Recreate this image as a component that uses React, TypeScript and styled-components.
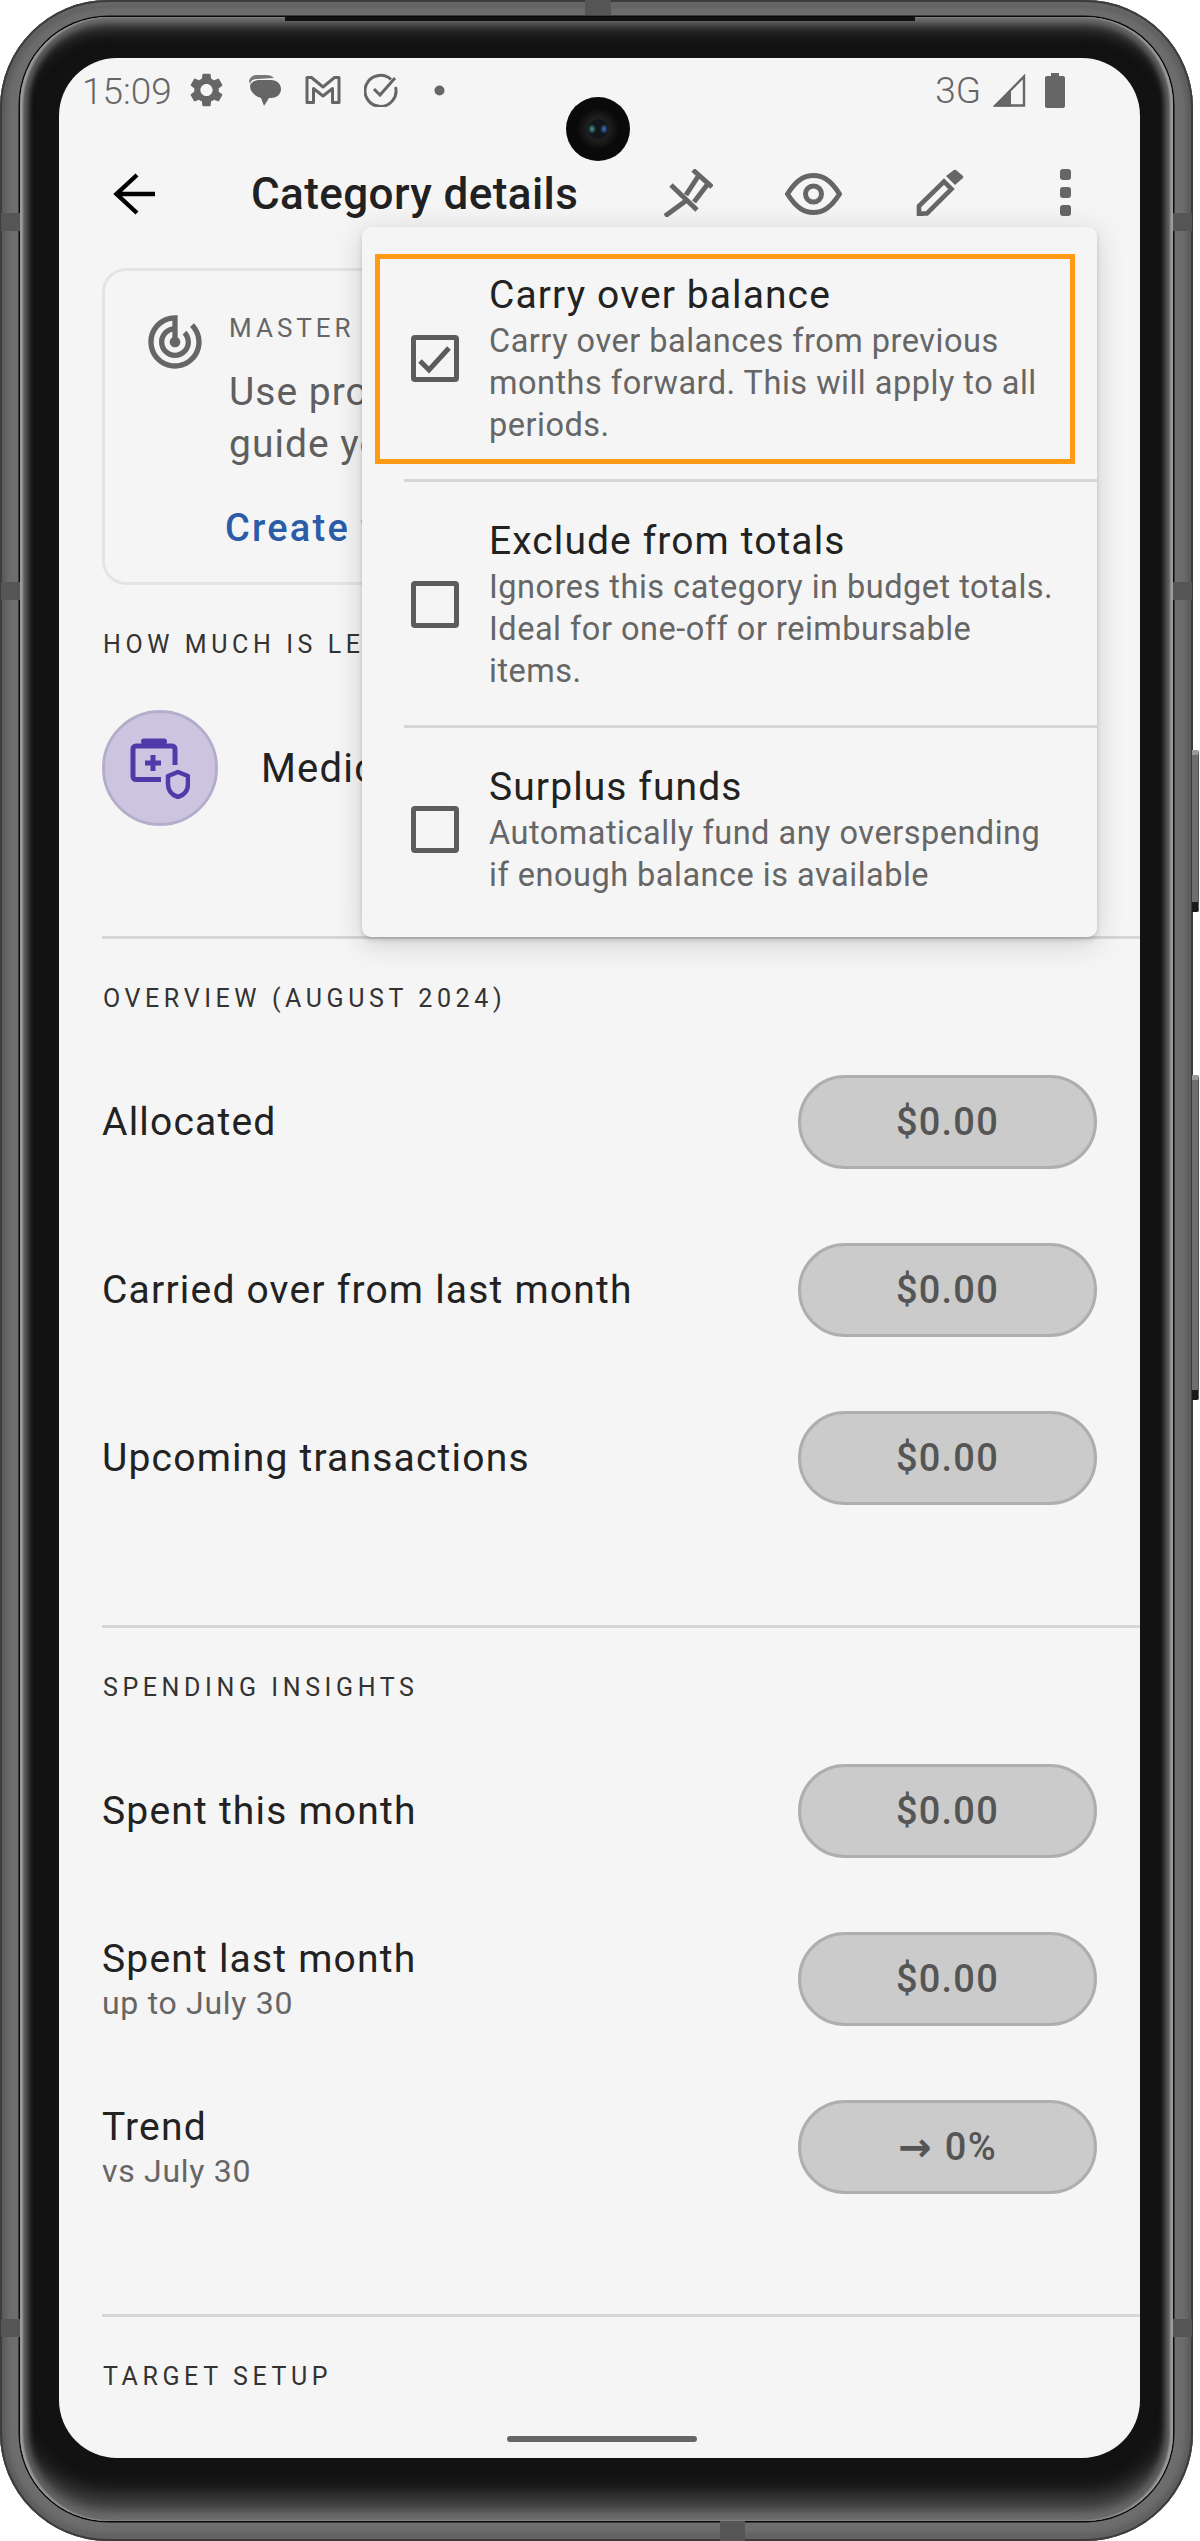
import React from "react";
import styled, { createGlobalStyle } from "styled-components";

const Global = createGlobalStyle`
  html, body { margin: 0; padding: 0; background: #fff; }
  body { font-family: Roboto, "Liberation Sans", sans-serif; }
`;

const Page = styled.div`
  position: relative;
  width: 1200px;
  height: 2541px;
  overflow: hidden;
  background: #fff;
`;

const Device = styled.div`
  position: relative;
  box-sizing: border-box;
  width: 1193px;
  height: 2541px;
  padding: 17px 20px 20px 20px;
  border-radius: 108px;
  background: #6e6e6e;
  box-shadow: inset 0 0 0 2px #3c3c3c, inset 0 0 8px 5px #525252, inset 0 -4px 3px #8a8a8a, inset 0 4px 3px #a0a0a0;
`;

const Bezel = styled.div`
  box-sizing: border-box;
  height: 100%;
  padding: 41px 33px 61px 39px;
  border-radius: 88px;
  background: #121212;
  box-shadow:
    0 0 0 1.500px #0a0a0a,
    inset 3px 0 2px #9c9c9c,
    inset -3px 0 2px #9c9c9c,
    inset 9px 0 6px -1px #5e5e5e,
    inset -9px 0 6px -1px #5e5e5e,
    inset 0 5px 8px #808080,
    inset 0 18px 14px -4px #3c3c3c,
    inset 0 -8px 12px #787878,
    inset 0 -34px 20px -8px #484848;
`;

const TopSeam = styled.i`
  position: absolute;
  left: 285px;
  top: 17px;
  width: 630px;
  height: 4px;
  background: #111;
`;

const Notch = styled.i<{ $x: number; $y: number; $w: number; $h: number }>`
  position: absolute;
  left: ${(p) => p.$x}px;
  top: ${(p) => p.$y}px;
  width: ${(p) => p.$w}px;
  height: ${(p) => p.$h}px;
  background: #555;
`;

const SideKey = styled.i<{ $y: number; $h: number }>`
  position: absolute;
  left: 1192px;
  top: ${(p) => p.$y}px;
  width: 7px;
  height: ${(p) => p.$h}px;
  box-sizing: border-box;
  background: #6e6e6e;
  border-top: 5px solid #999;
  border-bottom: 10px solid #1a1a1a;
  border-right: 1px solid #555;
  border-radius: 0 2px 2px 0;
`;

const Screen = styled.div`
  position: relative;
  width: 1081px;
  height: 2400px;
  overflow: hidden;
  border-radius: 58px;
  background: #f5f5f5;
`;

const StatusBar = styled.div`
  display: flex;
  align-items: center;
  height: 64px;
  padding: 0 75px 0 23px;
  color: #666;
`;

const Clock = styled.span`
  margin: 2px 18px 0 0;
  font-size: 37px;
  font-weight: 300;
`;

const StatusIcon = styled.svg<{ $left?: number }>`
  display: block;
  flex: none;
  margin-left: ${(p) => p.$left ?? 0}px;
`;

const StatusRight = styled.div`
  display: flex;
  align-items: center;
  margin-left: auto;
  gap: 12px;
`;

const Network = styled.span`
  font-size: 37px;
  font-weight: 300;
  line-height: 1;
`;

const Camera = styled.svg`
  position: absolute;
  left: 507px;
  top: 39px;
`;

const TopBar = styled.div`
  display: flex;
  align-items: center;
  height: 144px;
  padding-left: 54px;
`;

const Title = styled.h1`
  margin: 0 0 0 96px;
  width: 328px;
  flex: none;
  font-size: 44px;
  font-weight: 500;
  line-height: 52px;
  letter-spacing: 0.4px;
  color: #212121;
  white-space: nowrap;
`;

const BarIcon = styled.svg<{ $left: number; $up?: number }>`
  display: block;
  flex: none;
  margin-left: ${(p) => p.$left}px;
  margin-top: ${(p) => -(p.$up ?? 0)}px;
`;

const Card = styled.div`
  box-sizing: border-box;
  display: flex;
  height: 317px;
  margin: 2px 43px 0;
  padding: 39px 0 0 38px;
  border: 3px solid #e4e4e4;
  border-radius: 24px;
`;

const CardIcon = styled.svg`
  flex: none;
`;

const CardText = styled.div`
  margin-left: 22px;
  padding-top: 3px;
`;

const CardEyebrow = styled.div`
  font-size: 26px;
  line-height: 30px;
  letter-spacing: 4px;
  color: #666;
`;

const CardBody = styled.p`
  margin: 23px 0 0;
  width: 700px;
  font-size: 39px;
  line-height: 52px;
  letter-spacing: 1px;
  color: #5f5f5f;
`;

const CardLink = styled.div`
  margin: 34px 0 0 -4px;
  font-size: 38px;
  font-weight: 500;
  line-height: 48px;
  letter-spacing: 2.200px;
  color: #2a5ca8;
`;

const SectionLabel = styled.div`
  margin: 44px 0 0 44px;
  font-size: 25px;
  line-height: 32px;
  letter-spacing: 4.600px;
  color: #333;
  white-space: nowrap;
`;

const CategoryRow = styled.div`
  display: flex;
  align-items: center;
  margin: 49px 0 0 43px;
`;

const CategoryBadge = styled.div`
  box-sizing: border-box;
  display: flex;
  align-items: center;
  justify-content: center;
  width: 116px;
  height: 116px;
  border: 3px solid #b4aecb;
  border-radius: 50%;
  background: #cdc4e2;
`;

const CategoryName = styled.span`
  margin-left: 43px;
  font-size: 40px;
  letter-spacing: 1.200px;
  color: #222;
`;

const Rule = styled.div<{ $top: number }>`
  height: 3px;
  margin: ${(p) => p.$top}px 0 0 43px;
  background: #d6d6d6;
`;

const Rows = styled.div`
  display: flex;
  flex-direction: column;
  gap: 74px;
  margin: 60px 43px 0;
`;

const Row = styled.div`
  display: flex;
  align-items: center;
  justify-content: space-between;
  height: 94px;
`;

const RowText = styled.div`
  display: flex;
  flex-direction: column;
`;

const RowLabel = styled.span`
  font-size: 39px;
  line-height: 48px;
  letter-spacing: 1.200px;
  color: #222;
`;

const RowSub = styled.span`
  font-size: 32px;
  line-height: 40px;
  letter-spacing: 0.700px;
  color: #666;
`;

const Pill = styled.div`
  box-sizing: border-box;
  display: flex;
  align-items: center;
  justify-content: center;
  width: 299px;
  height: 94px;
  border: 3px solid #aeaeae;
  border-radius: 47px;
  background: #cbcbcb;
  font-size: 38px;
  font-weight: 500;
  letter-spacing: 1.200px;
  color: #555;
`;

const Arrow = styled.span`
  margin-right: 12px;
  font-family: "DejaVu Sans", sans-serif;
  font-size: 40px;
  font-weight: 700;
  line-height: 1;
`;

const HomeBar = styled.div`
  position: absolute;
  left: 448px;
  bottom: 16px;
  width: 190px;
  height: 6px;
  border-radius: 3px;
  background: #666;
`;

const Menu = styled.div`
  position: absolute;
  left: 303px;
  top: 169px;
  width: 735px;
  box-sizing: border-box;
  padding: 9px 0 8px;
  border-radius: 9px;
  background: #f5f5f5;
  box-shadow: 0 3px 5px rgba(0, 0, 0, 0.14), 0 6px 30px rgba(0, 0, 0, 0.16);
`;

const MenuItem = styled.div`
  position: relative;
  display: flex;
  align-items: center;
  padding: 35px 40px 33px 49px;
`;

const MenuDivider = styled.div`
  height: 3px;
  margin-left: 42px;
  background: #d6d6d6;
`;

const Box = styled.div`
  box-sizing: border-box;
  flex: none;
  width: 48px;
  height: 47px;
  border: 5px solid #5c5c5c;
  border-radius: 4px;
`;

const BoxTick = styled.svg`
  display: block;
  margin: -5px;
`;

const MenuText = styled.div`
  margin-left: 30px;
`;

const MenuTitle = styled.div`
  font-size: 39px;
  line-height: 49px;
  letter-spacing: 1.100px;
  color: #222;
`;

const MenuDesc = styled.div`
  font-size: 32.500px;
  line-height: 42px;
  letter-spacing: 0.500px;
  color: #666;
`;

const Highlight = styled.div`
  position: absolute;
  left: 13px;
  right: 22px;
  top: 18px;
  height: 210px;
  box-sizing: border-box;
  border: 5px solid #ff9a14;
  pointer-events: none;
`;

function Gear() {
  return (
    <StatusIcon width="33" height="34" viewBox="2.600 2 18.800 20" fill="#666">
      <path d="M19.140 12.940c.04-.3.06-.61.06-.94 0-.32-.02-.64-.07-.94l2.030-1.580c.18-.14.23-.41.12-.61l-1.920-3.320c-.12-.22-.37-.29-.59-.22l-2.390.96c-.5-.38-1.030-.7-1.620-.94l-.36-2.540c-.04-.24-.24-.41-.48-.41h-3.840c-.24 0-.43.17-.47.41l-.36 2.540c-.59.24-1.130.57-1.620.94l-2.390-.96c-.22-.08-.47 0-.59.22L2.740 8.870c-.12.21-.08.47.12.61l2.030 1.580c-.05.3-.09.63-.09.94s.02.64.07.94l-2.030 1.580c-.18.14-.23.41-.12.61l1.920 3.320c.12.22.37.29.59.22l2.390-.96c.5.38 1.030.7 1.620.94l.36 2.540c.05.24.24.41.48.41h3.840c.24 0 .44-.17.47-.41l.36-2.540c.59-.24 1.130-.56 1.620-.94l2.390.96c.22.08.47 0 .59-.22l1.920-3.320c.12-.22.07-.47-.12-.61l-2.010-1.580zM12 15.600c-1.980 0-3.600-1.620-3.600-3.600s1.620-3.600 3.600-3.600 3.600 1.620 3.600 3.600-1.620 3.600-3.600 3.600z" />
    </StatusIcon>
  );
}

function Chat() {
  return (
    <StatusIcon $left={26} width="32" height="32" viewBox="0 0 32 32" fill="#666">
      <path d="M0 7c1-4 4-6 8-6h9c4 0 6 1 8 3L9 5C5 5 2 6 1 10z" fill="#777" />
      <path d="M11 6h11c6 0 10 4 10 9s-4 9-10 9h-2l-5 8-3-8C6 22 1 18 1 12c1-4 5-6 10-6z" />
    </StatusIcon>
  );
}

function GmailM() {
  return (
    <StatusIcon $left={24} width="36" height="30" viewBox="0 0 36 30" fill="none" stroke="#666" strokeWidth="3" strokeLinejoin="round">
      <path d="M2 2.500h4.500L18 12 29.500 2.500H34v25h-6.500V13.500L18 21 8.500 13.500v14H2z" />
    </StatusIcon>
  );
}

function TaskCircle() {
  return (
    <StatusIcon $left={23} width="34" height="34" viewBox="0 0 34 34" fill="none" stroke="#666" strokeWidth="3">
      <path d="M27 6.500A15.500 15.500 0 1 0 31.500 14" />
      <path d="M10 16l6 6L31 5" />
    </StatusIcon>
  );
}

function App() {
  return (
    <Page>
      <Global />
      <Device>
        <Bezel>
          <Screen>
            <StatusBar>
              <Clock>15:09</Clock>
              <Gear />
              <Chat />
              <GmailM />
              <TaskCircle />
              <StatusIcon $left={36} width="11" height="11" viewBox="0 0 11 11" fill="#666">
                <circle cx="5.500" cy="5.500" r="5" />
              </StatusIcon>
              <StatusRight>
                <Network>3G</Network>
                <StatusIcon width="33" height="33" viewBox="0 0 33 33" fill="none">
                  <path d="M31 2.500V31.500H2.500z" stroke="#666" strokeWidth="2.400" />
                  <path d="M18 16V32.500H1z" fill="#666" />
                </StatusIcon>
                <StatusIcon $left={7} width="20" height="35" viewBox="0 0 20 35" fill="#666">
                  <path d="M6 0h8v3h4a2 2 0 0 1 2 2v28a2 2 0 0 1-2 2H2a2 2 0 0 1-2-2V5a2 2 0 0 1 2-2h4z" />
                </StatusIcon>
              </StatusRight>
            </StatusBar>
            <TopBar>
              <BarIcon $left={0} width="42" height="42" viewBox="0 0 42 42" fill="none" stroke="#000" strokeWidth="4.400">
                <path d="M42 21H4M24 2 3.500 21 24 40" />
              </BarIcon>
              <Title>Category details</Title>
              <BarIcon $left={85} $up={3} width="49" height="48" viewBox="0 0 49 48" fill="none" stroke="#666" strokeWidth="5">
                <path d="M29 1 48 18M7 16l26 25M23 31 1 47" />
                <path d="M35 6 22 26M43 16 30 33" />
              </BarIcon>
              <BarIcon $left={72} width="57" height="42" viewBox="0 0 57 42" fill="none" stroke="#666" strokeWidth="5">
                <path d="M2.500 21C12 6 20 2.500 28.500 2.500S45 6 54.500 21C45 36 37 39.500 28.500 39.500S12 36 2.500 21Z" />
                <circle cx="28.500" cy="21" r="8" />
              </BarIcon>
              <BarIcon $left={74} $up={3} width="48" height="47" viewBox="0 0 48 47" fill="none" stroke="#666" strokeWidth="4.600">
                <path d="M3 44.500V37L28 12.500 35.500 20 11 44.500Z" />
                <path d="M1 47v-7l7 7z" fill="#666" stroke="none" />
                <path d="M30 7 38 1a2 2 0 0 1 2 0l7 6a2 2 0 0 1 0 2l-8 7z" fill="#666" stroke="none" />
              </BarIcon>
              <BarIcon $left={96} $up={3} width="11" height="47" viewBox="0 0 11 47" fill="#666">
                <rect width="11" height="11" y="0" rx="3" />
                <rect width="11" height="11" y="18" rx="3" />
                <rect width="11" height="11" y="36" rx="3" />
              </BarIcon>
            </TopBar>

            <Card>
              <CardIcon width="64" height="64" viewBox="0 0 24 24" fill="#666">
                <path d="M19.070 4.930l-1.410 1.410C19.100 7.790 20 9.790 20 12c0 4.420-3.580 8-8 8s-8-3.580-8-8c0-4.080 3.050-7.440 7-7.930v2.020C8.160 6.570 6 9.030 6 12c0 3.310 2.690 6 6 6s6-2.690 6-6c0-1.660-.67-3.160-1.760-4.240l-1.410 1.410C15.550 9.900 16 10.890 16 12c0 2.210-1.790 4-4 4s-4-1.790-4-4c0-1.860 1.280-3.410 3-3.860v2.140c-.6.350-1 .98-1 1.720 0 1.100.9 2 2 2s2-.9 2-2c0-.74-.4-1.380-1-1.720V2h-1C6.480 2 2 6.480 2 12s4.480 10 10 10 10-4.480 10-10c0-2.760-1.120-5.260-2.930-7.070z" />
              </CardIcon>
              <CardText>
                <CardEyebrow>MASTER YOUR BUDGET</CardEyebrow>
                <CardBody>Use progressive spending targets to guide your monthly budget.</CardBody>
                <CardLink>Create target</CardLink>
              </CardText>
            </Card>

            <SectionLabel>HOW MUCH IS LEFT</SectionLabel>
            <CategoryRow>
              <CategoryBadge>
                <svg width="60" height="62" viewBox="0 0 60 62" fill="none" stroke="#5039a8" strokeWidth="5">
                  <path d="M31 42.500H6a3 3 0 0 1-3-3V12a3 3 0 0 1 3-3h36a3 3 0 0 1 3 3v16" />
                  <path d="M14 4.500h20" strokeWidth="6" strokeLinecap="round" />
                  <path d="M23 18v16M15 26h16" />
                  <path d="M48 35l10 4v8c0 7-4 11-10 13-6-2-10-6-10-13v-8z" strokeWidth="4.500" strokeLinejoin="round" />
                </svg>
              </CategoryBadge>
              <CategoryName>Medical</CategoryName>
            </CategoryRow>
            <Rule $top={110} />

            <SectionLabel>OVERVIEW (AUGUST 2024)</SectionLabel>
            <Rows>
              <Row><RowText><RowLabel>Allocated</RowLabel></RowText><Pill>$0.00</Pill></Row>
              <Row><RowText><RowLabel>Carried over from last month</RowLabel></RowText><Pill>$0.00</Pill></Row>
              <Row><RowText><RowLabel>Upcoming transactions</RowLabel></RowText><Pill>$0.00</Pill></Row>
            </Rows>
            <Rule $top={120} />

            <SectionLabel>SPENDING INSIGHTS</SectionLabel>
            <Rows>
              <Row><RowText><RowLabel>Spent this month</RowLabel></RowText><Pill>$0.00</Pill></Row>
              <Row><RowText><RowLabel>Spent last month</RowLabel><RowSub>up to July 30</RowSub></RowText><Pill>$0.00</Pill></Row>
              <Row><RowText><RowLabel>Trend</RowLabel><RowSub>vs July 30</RowSub></RowText><Pill><Arrow>→</Arrow>0%</Pill></Row>
            </Rows>
            <Rule $top={120} />

            <SectionLabel>TARGET SETUP</SectionLabel>

            <Camera width="64" height="64" viewBox="0 0 64 64">
              <defs>
                <radialGradient id="lens" cx="50%" cy="50%" r="50%">
                  <stop offset="0%" stopColor="#2e2e32" />
                  <stop offset="55%" stopColor="#1e1e1e" />
                  <stop offset="100%" stopColor="#0a0a0a" />
                </radialGradient>
                <radialGradient id="glintA" cx="50%" cy="50%" r="50%">
                  <stop offset="0%" stopColor="#4a9a94" />
                  <stop offset="100%" stopColor="#12181c" />
                </radialGradient>
                <radialGradient id="glintB" cx="50%" cy="50%" r="50%">
                  <stop offset="0%" stopColor="#4a70c8" />
                  <stop offset="100%" stopColor="#12181c" />
                </radialGradient>
              </defs>
              <circle cx="32" cy="32" r="32" fill="#0a0a0a" />
              <circle cx="32" cy="32" r="21" fill="url(#lens)" />
              <circle cx="32" cy="32" r="10" fill="#10161c" />
              <ellipse cx="26" cy="32" rx="4" ry="5" fill="url(#glintA)" />
              <ellipse cx="38" cy="32" rx="4" ry="5" fill="url(#glintB)" />
            </Camera>

            <Menu>
              <MenuItem>
                <Highlight />
                <Box>
                  <BoxTick width="48" height="47" viewBox="0 0 48 47" fill="none" stroke="#5c5c5c" strokeWidth="5">
                    <path d="M9 26l9 9L38 13" />
                  </BoxTick>
                </Box>
                <MenuText>
                  <MenuTitle>Carry over balance</MenuTitle>
                  <MenuDesc>Carry over balances from previous months forward. This will apply to all periods.</MenuDesc>
                </MenuText>
              </MenuItem>
              <MenuDivider />
              <MenuItem>
                <Box />
                <MenuText>
                  <MenuTitle>Exclude from totals</MenuTitle>
                  <MenuDesc>Ignores this category in budget totals. Ideal for one-off or reimbursable items.</MenuDesc>
                </MenuText>
              </MenuItem>
              <MenuDivider />
              <MenuItem>
                <Box />
                <MenuText>
                  <MenuTitle>Surplus funds</MenuTitle>
                  <MenuDesc>Automatically fund any overspending if enough balance is available</MenuDesc>
                </MenuText>
              </MenuItem>
            </Menu>

            <HomeBar />
          </Screen>
        </Bezel>
        <TopSeam />
        <Notch $x={585} $y={0} $w={26} $h={15} />
        <Notch $x={720} $y={2521} $w={25} $h={20} />
        <Notch $x={1} $y={213} $w={19} $h={18} />
        <Notch $x={1} $y={582} $w={19} $h={18} />
        <Notch $x={1} $y={2319} $w={19} $h={18} />
        <Notch $x={1173} $y={213} $w={19} $h={18} />
        <Notch $x={1173} $y={582} $w={19} $h={18} />
        <Notch $x={1173} $y={2319} $w={19} $h={18} />
      </Device>
      <SideKey $y={750} $h={162} />
      <SideKey $y={1075} $h={325} />
    </Page>
  );
}

export default App;
